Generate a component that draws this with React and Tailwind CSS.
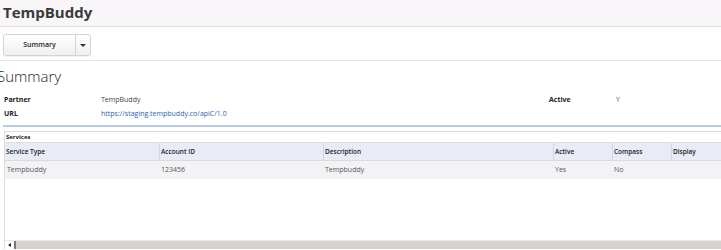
import { useState } from "react";

const cols = [
  { label: "Service Type", w: "w-[154px]" },
  { label: "Account ID", w: "w-[164px]" },
  { label: "Description", w: "w-[230px]" },
  { label: "Active", w: "w-[59px]" },
  { label: "Compass", w: "w-[59px]" },
  { label: "Display", w: "flex-1" },
];

const rows = [["Tempbuddy", "123456", "Tempbuddy", "Yes", "No", ""]];

export default function App() {
  const [open, setOpen] = useState(false);

  return (
    <div className="w-[721px] h-[250px] overflow-hidden bg-white text-[#333] font-['Open_Sans',sans-serif]">
      {/* Title bar */}
      <div className="h-[27px] bg-[#f8f6f8] border-b border-[#e2e0e2] px-[3px] flex items-center">
        <h1 className="text-[15px] font-bold text-[#3a3a3a] leading-none mb-[2px]">TempBuddy</h1>
      </div>

      {/* Toolbar */}
      <div className="h-[34px] border-b border-[#e4e4e4] px-[3px] pt-[7px]">
        <div className="flex w-[88px] h-[22px] rounded-[3px] border border-[#d4d4d4] bg-gradient-to-b from-white to-[#f0f0f0] shadow-[0_1px_1px_rgba(0,0,0,0.06)]">
          <button className="w-[72px] text-[7px] font-semibold text-[#222] border-r border-[#d4d4d4]">Summary</button>
          <button className="flex-1 flex items-center justify-center" onClick={() => setOpen(!open)}>
            <span className="block w-0 h-0 border-l-[3px] border-r-[3px] border-t-[3px] border-l-transparent border-r-transparent border-t-[#333]" />
          </button>
        </div>
      </div>

      {/* Summary */}
      <div className="ml-[-3px] mt-[5px] text-[15px] font-light text-[#222] leading-[20px]">Summary</div>

      <div className="mt-[9px] flex text-[7px] leading-[10px]">
        <div className="w-[101px] pl-[4px] font-bold text-[#222]">Partner</div>
        <div className="w-[448px] text-[#444]">TempBuddy</div>
        <div className="w-[67px] font-bold text-[#222]">Active</div>
        <div className="text-[#555]">Y</div>
      </div>
      <div className="mt-[4px] flex text-[7px] leading-[10px]">
        <div className="w-[101px] pl-[4px] font-bold text-[#222]">URL</div>
        <div className="text-[#2a62b0]">https://staging.tempbuddy.co/apiC/1.0</div>
      </div>
      <div className="mt-[6px] ml-[3px] h-[2px] bg-[#b6cbe8]" />

      {/* Services grid */}
      <div className="mt-[4px] ml-[4px] border-l border-t border-[#dcdcdc] h-[118px] flex flex-col">
        <div className="h-[11px] pl-[1px] text-[6px] font-bold text-[#222] leading-[11px] border-b border-[#dcdcdc]">Services</div>
        <div className="flex h-[18px] bg-[#e9ebf6] border-b border-[#d8dae6] text-[6.5px] font-semibold text-[#222]">
          {cols.map((c, i) => (
            <div key={c.label} className={`${c.w} flex items-center pl-[1px] ${i > 0 ? "border-l border-[#d4d6e2]" : ""}`}>
              {c.label}
            </div>
          ))}
        </div>
        {rows.map((r, ri) => (
          <div key={ri} className="flex h-[18px] bg-[#f3f3f5] text-[7px] text-[#555]">
            {cols.map((c, i) => (
              <div key={c.label} className={`${c.w} flex items-center pl-[2px]`}>{r[i]}</div>
            ))}
          </div>
        ))}
        <div className="flex-1" />
        <div className="h-[9px] bg-[#d6d3ce] border-t border-[#ebe9e6] flex items-center">
          <div className="w-[9px] h-[8px] bg-white flex items-center justify-center">
            <span className="block w-0 h-0 border-t-[2px] border-b-[2px] border-r-[3px] border-t-transparent border-b-transparent border-r-[#222]" />
          </div>
          <div className="w-[2px] h-[8px] bg-[#777]" />
        </div>
      </div>
    </div>
  );
}
